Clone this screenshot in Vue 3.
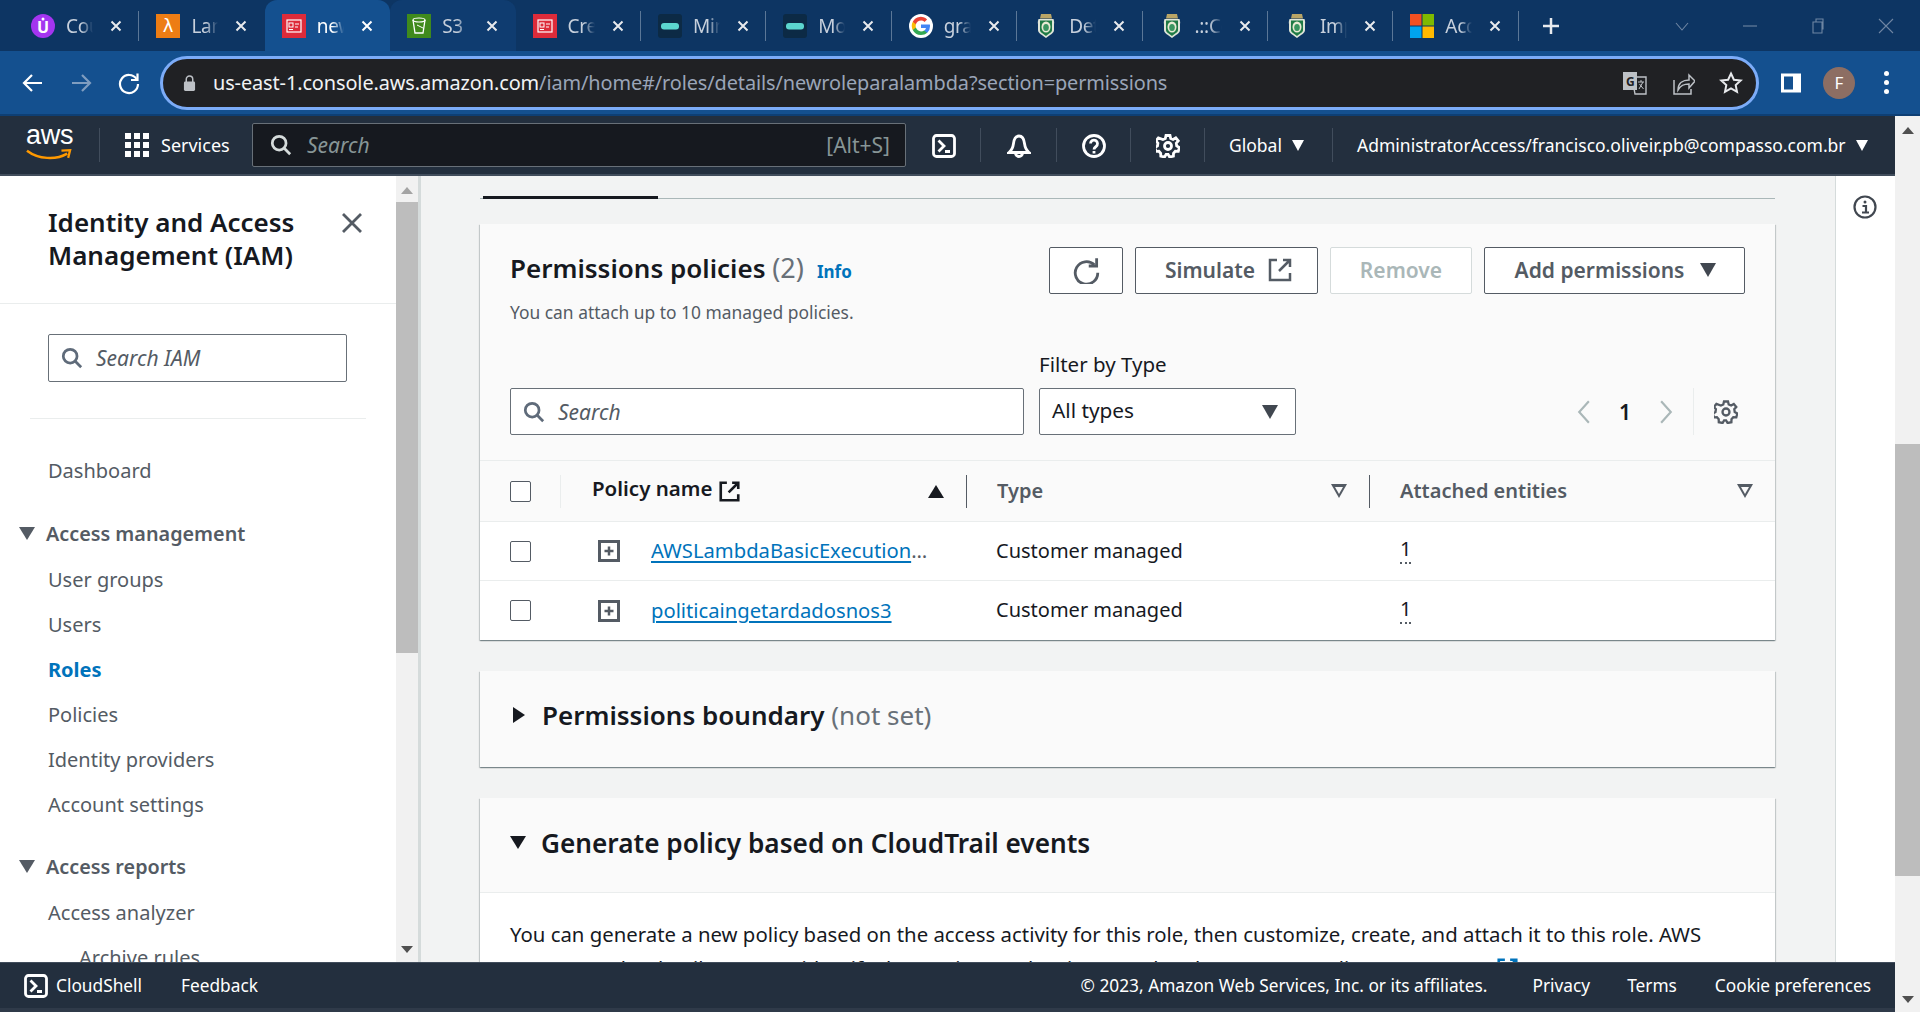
<script setup>
const tabs = [
  { t: 'Course', k: 'udemy' },
  { t: 'Lambda', k: 'lambda' },
  { t: 'newrole', k: 'iam', active: true },
  { t: 'S3 bucket', k: 's3', hover: true },
  { t: 'Create', k: 'iam' },
  { t: 'Minio', k: 'mini' },
  { t: 'Mongo', k: 'mini' },
  { t: 'gravar', k: 'google' },
  { t: 'Detran', k: 'crest' },
  { t: '.::Ceará', k: 'crest' },
  { t: 'Impressão', k: 'crest' },
  { t: 'Account', k: 'ms' }
]
const accessMgmt = ['User groups', 'Users', 'Roles', 'Policies', 'Identity providers', 'Account settings']
const rows = [
  { name: 'AWSLambdaBasicExecutionRole-policy', type: 'Customer managed', n: 1 },
  { name: 'politicaingetardadosnos3', type: 'Customer managed', n: 1 }
]
</script>

<template>
  <div class="app">
    <div class="tabstrip">
      <div v-for="(tab, i) in tabs" :key="i" class="tab" :class="{ active: tab.active, hover: tab.hover, nosep: tab.active || tab.hover || tabs[i + 1]?.active || tabs[i + 1]?.hover }">
        <svg class="fav" viewBox="0 0 24 24">
          <template v-if="tab.k === 'udemy'">
            <circle cx="12" cy="12" r="12" fill="#a435f0" />
            <text x="12" y="19" text-anchor="middle" font-size="16" font-weight="700" fill="#fff" font-family="Noto Sans">U</text>
            <circle cx="12" cy="5" r="1.500" fill="#fff" />
          </template>
          <template v-else-if="tab.k === 'lambda'">
            <rect width="24" height="24" fill="#ed7d14" />
            <text x="12" y="18" text-anchor="middle" font-size="18" fill="#fff" font-family="DejaVu Sans">λ</text>
          </template>
          <template v-else-if="tab.k === 'iam'">
            <rect width="24" height="24" fill="#dd2b3a" />
            <rect x="5" y="6" width="14" height="12" fill="none" stroke="#fff" stroke-width="1.200" />
            <rect x="7" y="9" width="4" height="4" fill="none" stroke="#fff" />
            <path d="M13 10h4M13 13h3M7 15.500h4" stroke="#fff" />
          </template>
          <template v-else-if="tab.k === 's3'">
            <rect width="24" height="24" fill="#3f8a1c" />
            <path d="M6 6l2 13h8l2-13" fill="none" stroke="#fff" stroke-width="1.300" />
            <ellipse cx="12" cy="6" rx="6" ry="2" fill="none" stroke="#fff" stroke-width="1.200" />
            <path d="M10 11l6 3" stroke="#fff" />
          </template>
          <template v-else-if="tab.k === 'mini'">
            <rect width="24" height="24" rx="3" fill="#0c2a45" />
            <rect x="3" y="9" width="18" height="6.500" rx="3" fill="#5cd6cf" />
          </template>
          <template v-else-if="tab.k === 'google'">
            <circle cx="12" cy="12" r="12" fill="#fff" />
            <path d="M21 12.200c0-.7 0-1.300-.2-1.800H12v3.500h5a4.300 4.300 0 0 1-1.900 2.800v2.300h3A9 9 0 0 0 21 12.200z" fill="#4285f4" />
            <path d="M12 21c2.500 0 4.500-.8 6.100-2.200l-3-2.300c-.8.600-1.900.9-3.100.9-2.400 0-4.400-1.600-5.100-3.800H3.800v2.400A9 9 0 0 0 12 21z" fill="#34a853" />
            <path d="M6.900 13.600a5.400 5.400 0 0 1 0-3.400V7.800H3.800a9 9 0 0 0 0 8.200z" fill="#fbbc05" />
            <path d="M12 6.600c1.300 0 2.500.5 3.500 1.400l2.600-2.600A9 9 0 0 0 3.800 7.800l3.100 2.400C7.600 8.100 9.600 6.600 12 6.600z" fill="#ea4335" />
          </template>
          <template v-else-if="tab.k === 'crest'">
            <path d="M7 0h10l1 4.500H6z" fill="#b9a566" />
            <path d="M4.500 5h15c.8 3 .8 3.500.5 5v6c0 3.500-4.500 5-8 8-3.500-3-8-4.500-8-8v-6c-.3-1.500-.3-2 .5-5z" fill="#dfe5d8" />
            <path d="M6 6.500h12v9.500c0 2.500-3.500 3.800-6 6-2.500-2.200-6-3.500-6-6z" fill="#1f7a45" />
            <ellipse cx="12" cy="13" rx="4.500" ry="5.500" fill="#e8ead4" />
            <ellipse cx="12" cy="13.500" rx="2.800" ry="3.500" fill="#3a9560" />
          </template>
          <template v-else>
            <rect width="11.500" height="11.500" fill="#f25022" />
            <rect x="12.500" width="11.500" height="11.500" fill="#7fba00" />
            <rect y="12.500" width="11.500" height="11.500" fill="#00a4ef" />
            <rect x="12.500" y="12.500" width="11.500" height="11.500" fill="#ffb900" />
          </template>
        </svg>
        <span class="tab-title">{{ tab.t }}</span>
        <svg class="tab-x" viewBox="0 0 12 12"><path d="M1.500 1.500l9 9M10.500 1.500l-9 9" /></svg>
      </div>
      <svg class="plus" viewBox="0 0 18 18"><path d="M9 1v16M1 9h16" /></svg>
      <div class="winctl">
        <svg viewBox="0 0 16 16"><path d="M2 5l6 7 6-7" /></svg>
        <svg viewBox="0 0 16 16"><path d="M1 8h14" /></svg>
        <svg viewBox="0 0 16 16"><path d="M3 4h9v11H3zM6 4V1h7v10h-1" /></svg>
        <svg viewBox="0 0 16 16"><path d="M1 1l14 14M15 1L1 15" /></svg>
      </div>
    </div>

    <div class="toolbar">
      <svg class="tb-ico first" viewBox="0 0 24 24"><path d="M21 12H4M11 4l-8 8 8 8" /></svg>
      <svg class="tb-ico dim" viewBox="0 0 24 24"><path d="M3 12h17M13 4l8 8-8 8" /></svg>
      <svg class="tb-ico" viewBox="0 0 24 24"><path d="M19.500 8A9 9 0 1 0 21 13" /><path d="M20.500 2.500V9H14" /></svg>
      <div class="omni">
        <svg class="lock" viewBox="0 0 14 18"><path d="M3.500 8V5a3.500 3.500 0 0 1 7 0v3" fill="none" stroke="#bdc1c6" stroke-width="1.600" /><rect x="1" y="7.500" width="12" height="10" rx="1.500" fill="#bdc1c6" /></svg>
        <span class="url"><span class="host">us-east-1.console.aws.amazon.com</span>/iam/home#/roles/details/newroleparalambda?section=permissions</span>
        <svg class="om-ico translate" viewBox="0 0 24 24">
          <path d="M9 6h14v17H12z" fill="#202124" stroke="#bdc1c6" stroke-width="1.400" />
          <rect x="0" y="1" width="14" height="18" fill="#bdc1c6" />
          <text x="3" y="15" font-size="12" font-weight="700" fill="#202124" font-family="Noto Sans">G</text>
          <path d="M15 11h6M18 9v2M16 18l4-7M16.500 13l4 5" stroke="#bdc1c6" fill="none" />
        </svg>
        <svg class="om-ico" viewBox="0 0 24 24"><path d="M3 9v14h17v-5M7 19c0-7 5-10 11-10V4l6 6-6 7v-4c-5 0-8 1-11 6z" fill="none" stroke="#bdc1c6" stroke-width="1.500" /></svg>
        <svg class="om-ico" viewBox="0 0 24 24"><path d="M12 2.500l2.900 6.200 6.800.8-5 4.600 1.300 6.700-6-3.400-6 3.400 1.300-6.700-5-4.600 6.800-.8z" fill="none" stroke="#e8eaed" stroke-width="2" /></svg>
      </div>
      <svg class="panel" viewBox="0 0 20 20"><rect x="1.500" y="2" width="17" height="16" fill="none" stroke="#fff" stroke-width="3" /><rect x="12" y="2" width="6.500" height="16" fill="#fff" /></svg>
      <div class="avatar">F</div>
      <div class="dots"><i></i><i></i><i></i></div>
    </div>

    <div class="belowbar">
      <div class="page">
        <nav class="awsnav">
          <div class="nav-logo">
            <div class="logo-in">
              <span class="awstext">aws</span>
              <svg class="smile" viewBox="0 0 48 12"><path d="M1 1.500c12 9 30 10 42 3" fill="none" stroke="#f90" stroke-width="2.600" /><path d="M37 1.500l9-.5-2 8" fill="none" stroke="#f90" stroke-width="2.400" /></svg>
            </div>
          </div>
          <div class="nav-services">
            <div class="grid9"><i v-for="n in 9" :key="n"></i></div>
            <span>Services</span>
          </div>
          <div class="nav-search">
            <svg class="srch" viewBox="0 0 24 24"><circle cx="10" cy="10" r="7.500" /><path d="M15.500 15.500L22 22" /></svg>
            <span class="ph">Search</span>
            <span class="kbd">[Alt+S]</span>
          </div>
          <div class="nav-ic wide1"><svg class="white-ico" viewBox="0 0 24 24"><rect x="1.500" y="1.500" width="21" height="21" rx="3" /><path d="M6.500 6.500L12 12l-5.500 5.500M13 17.500h5" /></svg></div>
          <div class="nav-ic sep wide2"><svg class="white-ico bell" viewBox="0 0 24 24"><path d="M2 18.500c3-2.500 4-5 4.500-9C7 5 9 2 12 2s5 3 5.500 7.500c.5 4 1.500 6.500 4.500 9z" /><path d="M8.500 19a3.500 3.500 0 0 0 7 0" /></svg></div>
          <div class="nav-ic sep wide3"><svg class="white-ico" viewBox="0 0 24 24"><circle cx="12" cy="12" r="10.500" /><path d="M8.500 9.500a3.500 3.500 0 1 1 5.500 3c-1.500 1-2 1.500-2 3M12 17v2.500" /></svg></div>
          <div class="nav-ic sep wide4"><svg class="white-ico" viewBox="0 0 24 24"><path d="M10 1.500h4l.7 3 2.400 1 2.700-1.600 2.500 3-2 2.300.4 2.800 2.600 1.500-1 3.800-3-.1-1.800 2-.1 3-3.800.8-1.500-2.600h-2l-1.500 2.600-3.800-.8-.1-3-1.800-2-3 .1-1-3.800 2.600-1.500.4-2.800-2-2.300 2.500-3L6.900 5.500l2.400-1z" /><circle cx="12" cy="12" r="3.500" /></svg></div>
          <div class="nav-menu sep global"><span>Global</span><b class="tri-d white small"></b></div>
          <div class="nav-menu sep acct"><span>AdministratorAccess/francisco.oliveir.pb@compasso.com.br</span><b class="tri-d white small"></b></div>
        </nav>

        <div class="middle">
          <aside class="sidebar">
            <div class="side-head">
              <h2>Identity and Access Management (IAM)</h2>
              <svg class="close" viewBox="0 0 20 20"><path d="M1 1l18 18M19 1L1 19" /></svg>
            </div>
            <div class="side-search">
              <svg class="srch grey" viewBox="0 0 24 24"><circle cx="10" cy="10" r="7.500" /><path d="M15.500 15.500L22 22" /></svg>
              <span class="ph2">Search IAM</span>
            </div>
            <div class="side-div"></div>
            <a class="item first">Dashboard</a>
            <div class="group"><b class="tri-d grey-tri"></b>Access management</div>
            <a v-for="m in accessMgmt" :key="m" class="item" :class="{ on: m === 'Roles' }">{{ m }}</a>
            <div class="group g2"><b class="tri-d grey-tri"></b>Access reports</div>
            <a class="item">Access analyzer</a>
            <a class="item sub">Archive rules</a>
          </aside>

          <div class="side-scroll">
            <span class="arrow up"></span>
            <div class="side-thumb"></div>
            <span class="arrow down pushed"></span>
          </div>

          <main class="main">
            <div class="tabsrow"><div class="tabmark"></div></div>

            <section class="card c1">
              <div class="c1-head">
                <div class="c1-top">
                  <div>
                    <div class="c1-title">Permissions policies <span class="count">(2)</span><a class="info">Info</a></div>
                    <div class="c1-sub">You can attach up to 10 managed policies.</div>
                  </div>
                  <div class="btns">
                    <button class="btn refresh"><svg viewBox="0 0 24 24"><path d="M19 7a10 10 0 1 0 3 7" /><path d="M21 1v7h-7" /></svg></button>
                    <button class="btn simulate">Simulate<svg viewBox="0 0 24 24"><path d="M9 2H2v20h20v-7" stroke-width="3" /><path d="M15 2h7v7M22 2L11 13" stroke-width="3" /></svg></button>
                    <button class="btn remove">Remove</button>
                    <button class="btn add">Add permissions<b class="tri-d"></b></button>
                  </div>
                </div>
                <div class="c1-filter">
                  <div class="inp">
                    <svg class="srch grey" viewBox="0 0 24 24"><circle cx="10" cy="10" r="7.500" /><path d="M15.500 15.500L22 22" /></svg>
                    <span class="ph2">Search</span>
                  </div>
                  <div class="selwrap">
                    <label>Filter by Type</label>
                    <div class="sel"><span>All types</span><b class="tri-d"></b></div>
                  </div>
                  <div class="pager">
                    <svg class="chev" viewBox="0 0 14 24"><path d="M12 2L3 12l9 10" /></svg>
                    <span>1</span>
                    <svg class="chev" viewBox="0 0 14 24"><path d="M2 2l9 10-9 10" /></svg>
                  </div>
                  <div class="pgear">
                    <svg viewBox="0 0 24 24"><path d="M10 1.500h4l.7 3 2.400 1 2.700-1.600 2.500 3-2 2.300.4 2.800 2.600 1.500-1 3.800-3-.1-1.800 2-.1 3-3.800.8-1.500-2.600h-2l-1.500 2.600-3.800-.8-.1-3-1.800-2-3 .1-1-3.800 2.600-1.500.4-2.800-2-2.300 2.500-3L6.900 5.500l2.400-1z" /><circle cx="12" cy="12" r="3.500" /></svg>
                  </div>
                </div>
              </div>

              <div class="trow thead">
                <div class="cell cb"><i class="check"></i></div>
                <div class="cell"><div class="hin faint"><span class="pol">Policy name</span><svg class="ext" viewBox="0 0 24 24"><path d="M9 2H2v20h20v-7" /><path d="M15 2h7v7M22 2L11 13" /></svg><b class="tri-u"></b></div></div>
                <div class="cell"><div class="hin dark"><span>Type</span><b class="tri-f"></b></div></div>
                <div class="cell"><div class="hin dark"><span>Attached entities</span><b class="tri-f"></b></div></div>
              </div>
              <div v-for="(r, i) in rows" :key="r.name" class="trow tbody" :class="{ last: i === rows.length - 1 }">
                <div class="cell cb"><i class="check"></i></div>
                <div class="cell c-name">
                  <svg class="plusbox" viewBox="0 0 22 22"><rect x="1.500" y="1.500" width="19" height="19" /><path d="M11 6.500v9M6.500 11h9" /></svg>
                  <div class="pname"><a>{{ r.name }}</a></div>
                </div>
                <div class="cell c-val">{{ r.type }}</div>
                <div class="cell c-val num"><span>{{ r.n }}</span></div>
              </div>
            </section>

            <section class="card c2">
              <b class="tri-r"></b>
              <h3>Permissions boundary <span>(not set)</span></h3>
            </section>

            <section class="card c3">
              <div class="c3-head"><b class="tri-d big"></b><h3>Generate policy based on CloudTrail events</h3></div>
              <p>You can generate a new policy based on the access activity for this role, then customize, create, and attach it to this role. AWS uses your CloudTrail events to identify the services and actions used and generate a policy. <a>Learn more</a> <svg class="ext blue" viewBox="0 0 24 24"><path d="M9 2H2v20h20v-7" /><path d="M15 2h7v7M22 2L11 13" /></svg></p>
            </section>
          </main>

          <div class="rail">
            <svg viewBox="0 0 24 24"><circle cx="12" cy="12" r="10.500" /><circle cx="12" cy="7" r="1.500" fill="#414750" stroke="none" /><path d="M9.500 11H13v6.500M9 17.500h7" /></svg>
          </div>
        </div>

        <footer class="foot">
          <div class="f-cs"><svg class="white-ico" viewBox="0 0 24 24"><rect x="1.500" y="1.500" width="21" height="21" rx="3" /><path d="M6.500 6.500L12 12l-5.500 5.500M13 17.500h5" /></svg><span>CloudShell</span></div>
          <span class="f-fb">Feedback</span>
          <span class="f-copy">© 2023, Amazon Web Services, Inc. or its affiliates.</span>
          <span class="f-l1">Privacy</span>
          <span class="f-l2">Terms</span>
          <span class="f-l3">Cookie preferences</span>
        </footer>
      </div>

      <div class="win-scroll">
        <span class="arrow up dark"></span>
        <div class="win-thumb"></div>
        <span class="arrow down dark pushed"></span>
      </div>
    </div>
  </div>
</template>

<style>
html, body { margin: 0; overflow: hidden; }
</style>

<style scoped>
.app { width: 1920px; height: 1012px; overflow: hidden; font-family: "Noto Sans", sans-serif; display: flex; flex-direction: column; background: #fff; }
svg { display: block; flex: none; }
b, i { display: block; flex: none; }

.tabstrip { height: 51px; flex: none; background: #0d3563; display: flex; align-items: center; padding-left: 14px; box-sizing: border-box; }
.tab { width: 125.400px; height: 51px; flex: none; display: flex; align-items: center; padding-left: 17px; box-sizing: border-box; position: relative; color: #c7d0dc; }
.tab::after { content: ""; position: absolute; right: 0; top: 11px; height: 30px; width: 1px; background: #5b7797; }
.tab.nosep::after { display: none; }
.tab.active { background: #14508f; border-radius: 12px 12px 0 0; color: #fff; }
.tab.hover { background: #0f3c70; border-radius: 12px 12px 0 0; }
.fav { width: 24px; height: 24px; }
.tab-title { margin-left: 11px; width: 27px; overflow: hidden; white-space: nowrap; font-size: 19px; letter-spacing: -.3px; -webkit-mask-image: linear-gradient(90deg, #000 55%, transparent 100%); mask-image: linear-gradient(90deg, #000 55%, transparent 100%); }
.tab-x { width: 12px; height: 12px; margin-left: 17px; }
.tab-x path { stroke: #e8eaed; stroke-width: 2; fill: none; }
.active .tab-x path { stroke: #fff; }
.plus { width: 18px; height: 18px; margin-left: 23px; }
.plus path { stroke: #e8eaed; stroke-width: 2.500; fill: none; }
.winctl { margin-left: auto; display: flex; align-items: center; width: 255px; gap: 52px; padding-right: 26px; box-sizing: border-box; justify-content: flex-end; }
.winctl svg { width: 16px; height: 16px; }
.winctl path { fill: none; stroke: #6f86a3; stroke-width: 1.100; }

.toolbar { height: 65px; flex: none; background: #14508f; display: flex; align-items: center; box-sizing: border-box; border-bottom: 2px solid #0e3f74; }
.tb-ico { width: 24px; height: 24px; margin-left: 24px; }
.tb-ico.first { margin-left: 21px; }
.tb-ico path { stroke: #fff; stroke-width: 2.200; fill: none; }
.tb-ico.dim path { stroke: #7f9dc0; }
.omni { margin-left: 19px; width: 1599px; height: 54px; box-sizing: border-box; background: #202124; border: 3px solid #7cacf8; border-radius: 27px; display: flex; align-items: center; padding-left: 20px; }
.lock { width: 13px; height: 18px; }
.url { margin-left: 17px; font-size: 19.900px; color: #9aa5b8; white-space: nowrap; letter-spacing: -.1px; }
.host { color: #f1f3f4; }
.om-ico { width: 24px; height: 24px; }
.translate { margin-left: auto; }
.om-ico + .om-ico { margin-left: 24px; }
.om-ico:last-child { margin-right: 13px; }
.panel { width: 20px; height: 20px; margin-left: 22px; }
.avatar { margin-left: 22px; width: 32px; height: 32px; border-radius: 50%; background: #8d6e63; color: #fff; font-size: 17px; display: flex; align-items: center; justify-content: center; }
.dots { margin-left: 29px; display: flex; flex-direction: column; gap: 4px; }
.dots i { width: 5px; height: 5px; border-radius: 50%; background: #fff; }

.belowbar { flex: 1; min-height: 0; display: flex; }
.page { width: 1895px; flex: none; display: flex; flex-direction: column; min-height: 0; }

.awsnav { height: 60px; flex: none; background: #232f3e; border-bottom: 2px solid #414d5c; box-sizing: border-box; display: flex; align-items: center; color: #fff; font-size: 18px; }
.nav-logo { width: 100px; height: 34px; border-right: 1px solid #414d5c; box-sizing: border-box; padding-left: 26px; flex: none; }
.logo-in { width: 48px; }
.awstext { display: block; font-size: 27px; line-height: 24px; font-family: "Liberation Sans", sans-serif; letter-spacing: -.2px; color: #fff; margin-top: -5px; }
.smile { width: 46px; height: 12px; margin-top: 2px; }
.nav-services { width: 152px; flex: none; padding-left: 25px; box-sizing: border-box; display: flex; align-items: center; gap: 12px; }
.grid9 { width: 24px; height: 24px; display: grid; grid-template-columns: repeat(3, 6px); gap: 3px; }
.grid9 i { background: #fff; width: 6px; height: 6px; }
.nav-search { width: 654px; height: 44px; flex: none; box-sizing: border-box; background: #16191f; border: 1px solid #687078; border-radius: 2px; display: flex; align-items: center; padding: 0 15px 0 17px; }
.srch { width: 22px; height: 22px; }
.srch circle, .srch path { fill: none; stroke: #d5dbdb; stroke-width: 3; }
.srch.grey circle, .srch.grey path { stroke: #5f6b7a; }
.ph { font-style: italic; margin-left: 15px; color: #879596; font-size: 21px; }
.kbd { margin-left: auto; color: #879596; font-size: 21px; }
.nav-ic, .nav-menu { height: 34px; box-sizing: border-box; flex: none; display: flex; align-items: center; justify-content: center; }
.nav-ic svg { margin-top: 2px; }
.sep { border-left: 1px solid #414d5c; }
.wide1 { width: 74px; padding-left: 2px; }
.wide2 { width: 76px; }
.wide3 { width: 74px; }
.wide4 { width: 74px; }
.white-ico { width: 24px; height: 24px; }
.white-ico rect, .white-ico path, .white-ico circle { fill: none; stroke: #fff; stroke-width: 2.800; }
.bell { height: 26px; }
.nav-menu { font-size: 17.500px; gap: 10px; }
.global { width: 128px; padding-left: 24px; justify-content: flex-start; }
.acct { width: 563px; padding-left: 24px; justify-content: flex-start; }

.tri-d { width: 0; height: 0; border-left: 8px solid transparent; border-right: 8px solid transparent; border-top: 14px solid #414750; }
.tri-d.white { border-top-color: #fff; }
.tri-d.small { border-left-width: 6px; border-right-width: 6px; border-top-width: 11px; }
.grey-tri { border-top-color: #545b64; margin-right: 11px; border-left-width: 8px; border-right-width: 8px; border-top-width: 13px; }

.middle { flex: 1; min-height: 0; display: flex; overflow: hidden; }
.sidebar { width: 396px; flex: none; background: #fff; overflow: hidden; box-sizing: border-box; }
.side-head { height: 128px; box-sizing: border-box; padding: 30px 0 0 48px; border-bottom: 1px solid #eaeded; display: flex; }
.side-head h2 { margin: 0; width: 270px; font-size: 26px; line-height: 33px; font-weight: 600; color: #16191f; }
.close { width: 20px; height: 20px; margin: 7px 0 0 24px; }
.close path { stroke: #545b64; stroke-width: 2.800; fill: none; }
.side-search { margin: 30px 0 0 48px; width: 299px; height: 48px; box-sizing: border-box; border: 1px solid #687078; border-radius: 2px; display: flex; align-items: center; padding-left: 12px; }
.ph2 { font-style: italic; color: #545b64; font-size: 21px; margin-left: 13px; }
.side-div { height: 1px; background: #eaeded; margin: 36px 30px 0; }
.item { display: block; height: 45px; line-height: 45px; padding-left: 48px; font-size: 20px; color: #545b64; white-space: nowrap; }
.item.first { margin-top: 29px; }
.item.on { color: #0073bb; font-weight: 700; }
.item.sub { padding-left: 79px; }
.group { height: 46px; margin-top: 18px; box-sizing: border-box; padding-bottom: 1px; display: flex; align-items: center; padding-left: 19px; font-size: 19.800px; font-weight: 600; color: #545b64; }
.group.g2 { margin-top: 17px; }

.side-scroll { width: 25px; flex: none; background: #f1f1f1; box-sizing: border-box; border-right: 3px solid #d5dbdb; display: flex; flex-direction: column; align-items: center; }
.arrow { width: 0; height: 0; border-left: 6px solid transparent; border-right: 6px solid transparent; flex: none; }
.arrow.up { border-bottom: 7px solid #a3a3a3; margin: 11px 0 8px; }
.arrow.down { border-top: 7px solid #505050; margin: 0 0 9px; }
.arrow.pushed { margin-top: auto; }
.side-thumb { width: 22px; height: 451px; background: #bdbdbd; }

.main { flex: 1; min-width: 0; background: #f2f3f3; padding: 0 60px 0 59px; overflow: hidden; box-sizing: border-box; }
.tabsrow { height: 23px; border-bottom: 1px solid #aab7b8; box-sizing: border-box; padding-left: 3px; display: flex; align-items: flex-end; }
.tabmark { width: 175px; height: 3px; background: #16191f; margin-bottom: -1px; }
.card { background: #fff; box-shadow: 0 1px 1px rgba(0, 28, 36, .3), 1px 1px 1px rgba(0, 28, 36, .15), -1px 1px 1px rgba(0, 28, 36, .15); }
.c1 { margin-top: 25px; }
.c1-head { background: #fafafa; padding: 23px 30px 0; height: 237px; box-sizing: border-box; border-bottom: 1px solid #eaeded; display: flex; flex-direction: column; }
.c1-top { display: flex; justify-content: space-between; height: 104px; flex: none; }
.c1-title { font-size: 26px; line-height: 44px; font-weight: 600; color: #16191f; white-space: nowrap; margin-top: -1px; }
.count { color: #687078; font-weight: 400; font-size: 27px; }
.info { font-size: 17px; font-weight: 700; color: #0073bb; margin-left: 13px; }
.c1-sub { font-size: 17.400px; color: #545b64; line-height: 24px; margin-top: 6px; }
.btns { display: flex; gap: 12px; align-items: flex-start; }
.btn { height: 47px; box-sizing: border-box; background: #fff; border: 1px solid #545b64; border-radius: 2px; font: 600 21px "Noto Sans", sans-serif; color: #545b64; display: flex; align-items: center; justify-content: center; padding: 0 0 2px; }
.btn svg { width: 24px; height: 24px; }
.btn path { fill: none; stroke: #545b64; stroke-width: 2.500; }
.refresh { width: 74px; padding: 0; }
.refresh svg { width: 27px; height: 27px; }
.simulate { width: 183px; gap: 13px; padding-left: 4px; }
.remove { width: 142px; border-color: #d5dbdb; color: #aab7b8; }
.add { width: 261px; gap: 16px; padding-left: 2px; }
.c1-filter { display: flex; align-items: flex-end; }
.inp { width: 514px; height: 47px; box-sizing: border-box; background: #fff; border: 1px solid #687078; border-radius: 2px; display: flex; align-items: center; padding-left: 12px; }
.selwrap { margin-left: 15px; width: 257px; }
.selwrap label { display: block; font-size: 20.500px; line-height: 27px; color: #16191f; margin-bottom: 10px; }
.sel { height: 47px; box-sizing: border-box; background: #fff; border: 1px solid #687078; border-radius: 2px; display: flex; align-items: center; justify-content: space-between; padding: 0 17px 3px 12px; font-size: 20.800px; color: #16191f; }
.sel b { margin-top: 3px; }
.pager { height: 47px; margin-left: auto; display: flex; align-items: center; gap: 28px; font-size: 21px; font-weight: 600; color: #16191f; }
.chev { width: 15px; height: 26px; }
.chev path { fill: none; stroke: #aab7b8; stroke-width: 2; }
.pgear { height: 47px; margin-left: 19px; width: 52px; padding-left: 20px; box-sizing: border-box; border-left: 1px solid #eaeded; display: flex; align-items: center; }
.pgear svg { width: 24px; height: 24px; }
.pgear path, .pgear circle { fill: none; stroke: #545b64; stroke-width: 2.300; }

.trow { display: grid; grid-template-columns: 80px 406px 403px 1fr; align-items: center; box-sizing: border-box; }
.thead { height: 61px; background: #fafafa; border-bottom: 1px solid #eaeded; }
.tbody { height: 59px; border-bottom: 1px solid #eaeded; }
.tbody.last { border-bottom: 0; }
.cell { min-width: 0; display: flex; align-items: center; }
.cb { padding-left: 30px; }
.check { width: 21px; height: 21px; box-sizing: border-box; background: #fff; border: 1px solid #545b64; border-radius: 2px; }
.hin { flex: 1; height: 33px; border-left: 1px solid #545b64; padding: 0 22px 0 30px; display: flex; align-items: center; font-size: 20px; font-weight: 600; color: #545b64; }
.hin.faint { border-left-color: #eaeded; padding-left: 31px; font-size: 20.500px; }
.pol { color: #16191f; margin-top: -6px; }
.hin.dark { justify-content: space-between; }
.hin.dark span { margin-top: -2px; }
.ext { width: 21px; height: 21px; margin-left: 7px; }
.ext path { fill: none; stroke: #16191f; stroke-width: 3; }
.tri-u { margin-left: auto; width: 0; height: 0; border-left: 8px solid transparent; border-right: 8px solid transparent; border-bottom: 13px solid #16191f; }
.tri-f { width: 16px; height: 14px; box-sizing: border-box; clip-path: polygon(0 0, 100% 0, 50% 100%); background: #545b64; position: relative; }
.tri-f::after { content: ""; position: absolute; left: 4px; top: 3px; width: 8px; height: 7px; background: #fafafa; clip-path: polygon(0 0, 100% 0, 50% 100%); }
.c-name { padding-left: 38px; }
.plusbox { width: 22px; height: 22px; }
.plusbox rect { fill: none; stroke: #545b64; stroke-width: 3; }
.plusbox path { fill: none; stroke: #545b64; stroke-width: 2.500; }
.pname { margin-left: 31px; width: 283px; overflow: hidden; text-overflow: ellipsis; white-space: nowrap; font-size: 20.200px; color: #545b64; padding-bottom: 2px; }
.pname a { color: #0073bb; text-decoration: underline; text-underline-offset: 3px; text-decoration-thickness: 2px; }
.c-val { font-size: 20px; color: #16191f; padding: 0 0 2px 30px; white-space: nowrap; }
.num { padding-left: 31px; }
.num span { border-bottom: 2px dotted #545b64; line-height: 26px; }

.c2 { margin-top: 31px; height: 96px; box-sizing: border-box; background: #fafafa; padding: 0 0 9px 33px; display: flex; align-items: center; }
.tri-r { width: 0; height: 0; border-top: 8px solid transparent; border-bottom: 8px solid transparent; border-left: 12px solid #16191f; margin-right: 17px; }
.c2 h3, .c3-head h3 { margin: 0; font-size: 26px; font-weight: 600; color: #16191f; white-space: nowrap; }
.c3-head h3 { font-size: 26.200px; }
.c2 h3 span { font-weight: 400; color: #687078; }
.c3 { margin-top: 31px; }
.c3-head { height: 95px; box-sizing: border-box; background: #fafafa; border-bottom: 1px solid #eaeded; display: flex; align-items: center; padding: 0 0 5px 30px; }
.big { border-top-color: #16191f; margin-right: 15px; border-top-width: 13px; }
.c3 p { margin: 0; padding: 24px 30px 0; font-size: 20.350px; line-height: 34px; color: #16191f; }
.c3 p a { color: #0073bb; text-decoration: underline; }
.ext.blue { display: inline-block; vertical-align: -3px; margin-left: 2px; }
.ext.blue path { stroke: #0073bb; }

.rail { width: 60px; flex: none; background: #fff; border-left: 1px solid #d5dbdb; box-sizing: border-box; padding: 19px 0 0 17px; }
.rail svg { width: 24px; height: 24px; }
.rail circle:first-child, .rail path { fill: none; stroke: #414750; stroke-width: 2.200; }

.foot { height: 50px; flex: none; box-sizing: border-box; background: #232f3e; border-top: 1px solid #414d5c; border-bottom: 4px solid #2f3a49; display: flex; align-items: center; color: #fff; font-size: 17.300px; white-space: nowrap; }
.f-cs { display: flex; align-items: center; gap: 8px; margin-left: 24px; }
.f-fb { margin-left: 39px; }
.f-copy { margin-left: auto; }
.f-l1 { margin-left: 45px; }
.f-l2 { margin-left: 37px; }
.f-l3 { margin-left: 38px; margin-right: 24px; }

.win-scroll { width: 25px; flex: none; background: #f1f1f1; display: flex; flex-direction: column; align-items: center; }
.win-thumb { width: 25px; height: 432px; background: #bdbdbd; margin-top: 302px; }
.arrow.dark.up { border-bottom-color: #505050; }
</style>
